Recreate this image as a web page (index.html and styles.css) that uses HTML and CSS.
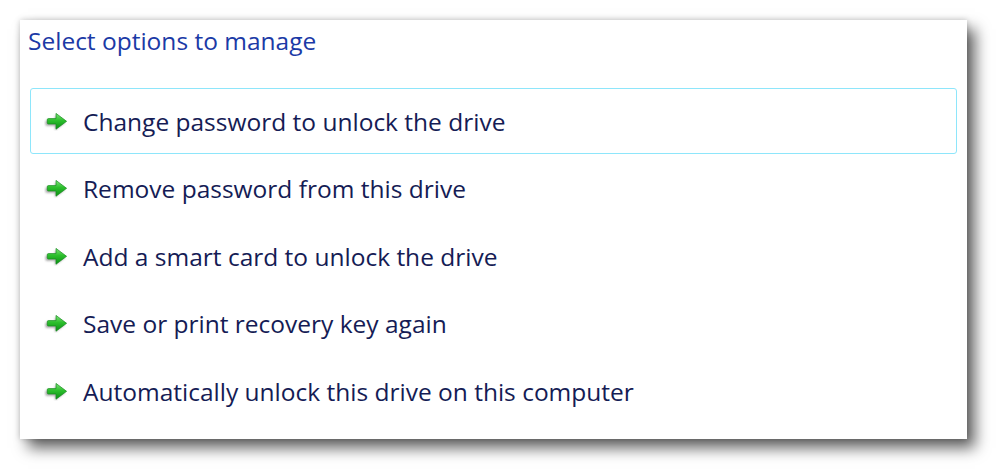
FILE: index.html
```html
<!DOCTYPE html>
<html lang="en">
<head>
  <meta charset="UTF-8">
  <title>Manage BitLocker</title>
  <link rel="stylesheet" href="styles.css">
</head>
<body>

<div class="panel">
  <h1 class="instruction">Select options to manage</h1>

  <!-- Command links -->
  <ul class="links">
    <li class="link selected">
      <svg class="arrow" viewBox="0 0 24 19"><use href="#arrow"/></svg>
      <span>Change password to unlock the drive</span>
    </li>
    <li class="link">
      <svg class="arrow" viewBox="0 0 24 19"><use href="#arrow"/></svg>
      <span>Remove password from this drive</span>
    </li>
    <li class="link">
      <svg class="arrow" viewBox="0 0 24 19"><use href="#arrow"/></svg>
      <span>Add a smart card to unlock the drive</span>
    </li>
    <li class="link">
      <svg class="arrow" viewBox="0 0 24 19"><use href="#arrow"/></svg>
      <span>Save or print recovery key again</span>
    </li>
    <li class="link">
      <svg class="arrow" viewBox="0 0 24 19"><use href="#arrow"/></svg>
      <span>Automatically unlock this drive on this computer</span>
    </li>
  </ul>
</div>

<svg width="0" height="0" class="defs">
  <defs>
    <linearGradient id="g" x1="0" y1="0" x2="0" y2="1">
      <stop offset="0" stop-color="#7fe27a"/>
      <stop offset="0.45" stop-color="#2cbf2c"/>
      <stop offset="1" stop-color="#0a8f14"/>
    </linearGradient>
    <filter id="blur" x="-40%" y="-40%" width="180%" height="180%">
      <feGaussianBlur stdDeviation="1.3"/>
    </filter>
    <g id="arrow">
      <path d="M2.5 8 Q1.5 8 1.5 9.5 V11.5 Q1.5 13 3 13 H11 V17.5 L21 10 L11 2.5 V7 H3 Z" fill="#7d7d7d" opacity="0.7" filter="url(#blur)" transform="translate(0 0.8)"/>
      <path d="M4.5 6.6 Q3.3 6.6 3.3 7.8 V10.8 Q3.3 12 4.5 12 H12 V17.2 L22.6 9.3 L12 1.4 V6.6 Z" fill="url(#g)" stroke="#158c1e" stroke-width="0.7" stroke-linejoin="round"/>
    </g>
  </defs>
</svg>

</body>
</html>
```

FILE: styles.css
```css
body {
  margin: 0;
  padding: 20px 0 0 20px;
  min-height: 472px;
  box-sizing: border-box;
  background: #fff;
  font-family: "Open Sans", "Noto Sans", sans-serif;
}

.panel {
  width: 947px;
  height: 419px;
  box-sizing: border-box;
  background: #fff;
  padding: 4px 10px 0 8px;
  box-shadow: 8px 9px 14px rgba(0, 0, 0, 0.62), 0 0 6px rgba(0, 0, 0, 0.2);
}

.instruction {
  margin: 0;
  font-size: 24.5px;
  font-weight: normal;
  line-height: 34px;
  color: #1b3aa6;
}

.links {
  list-style: none;
  margin: 30px 0 0 2px;
  padding: 0;
  display: flex;
  flex-direction: column;
  gap: 1.5px;
}

.link {
  height: 66px;
  box-sizing: border-box;
  border: 1px solid transparent;
  border-radius: 3px;
  display: flex;
  align-items: center;
  padding-left: 13px;
  color: #151c55;
  font-size: 24.5px;
}

.link.selected {
  border-color: #8ee6fb;
}

.arrow {
  width: 24px;
  height: 19px;
  margin-right: 15px;
  margin-top: 0;
}

.defs {
  position: absolute;
}
```
